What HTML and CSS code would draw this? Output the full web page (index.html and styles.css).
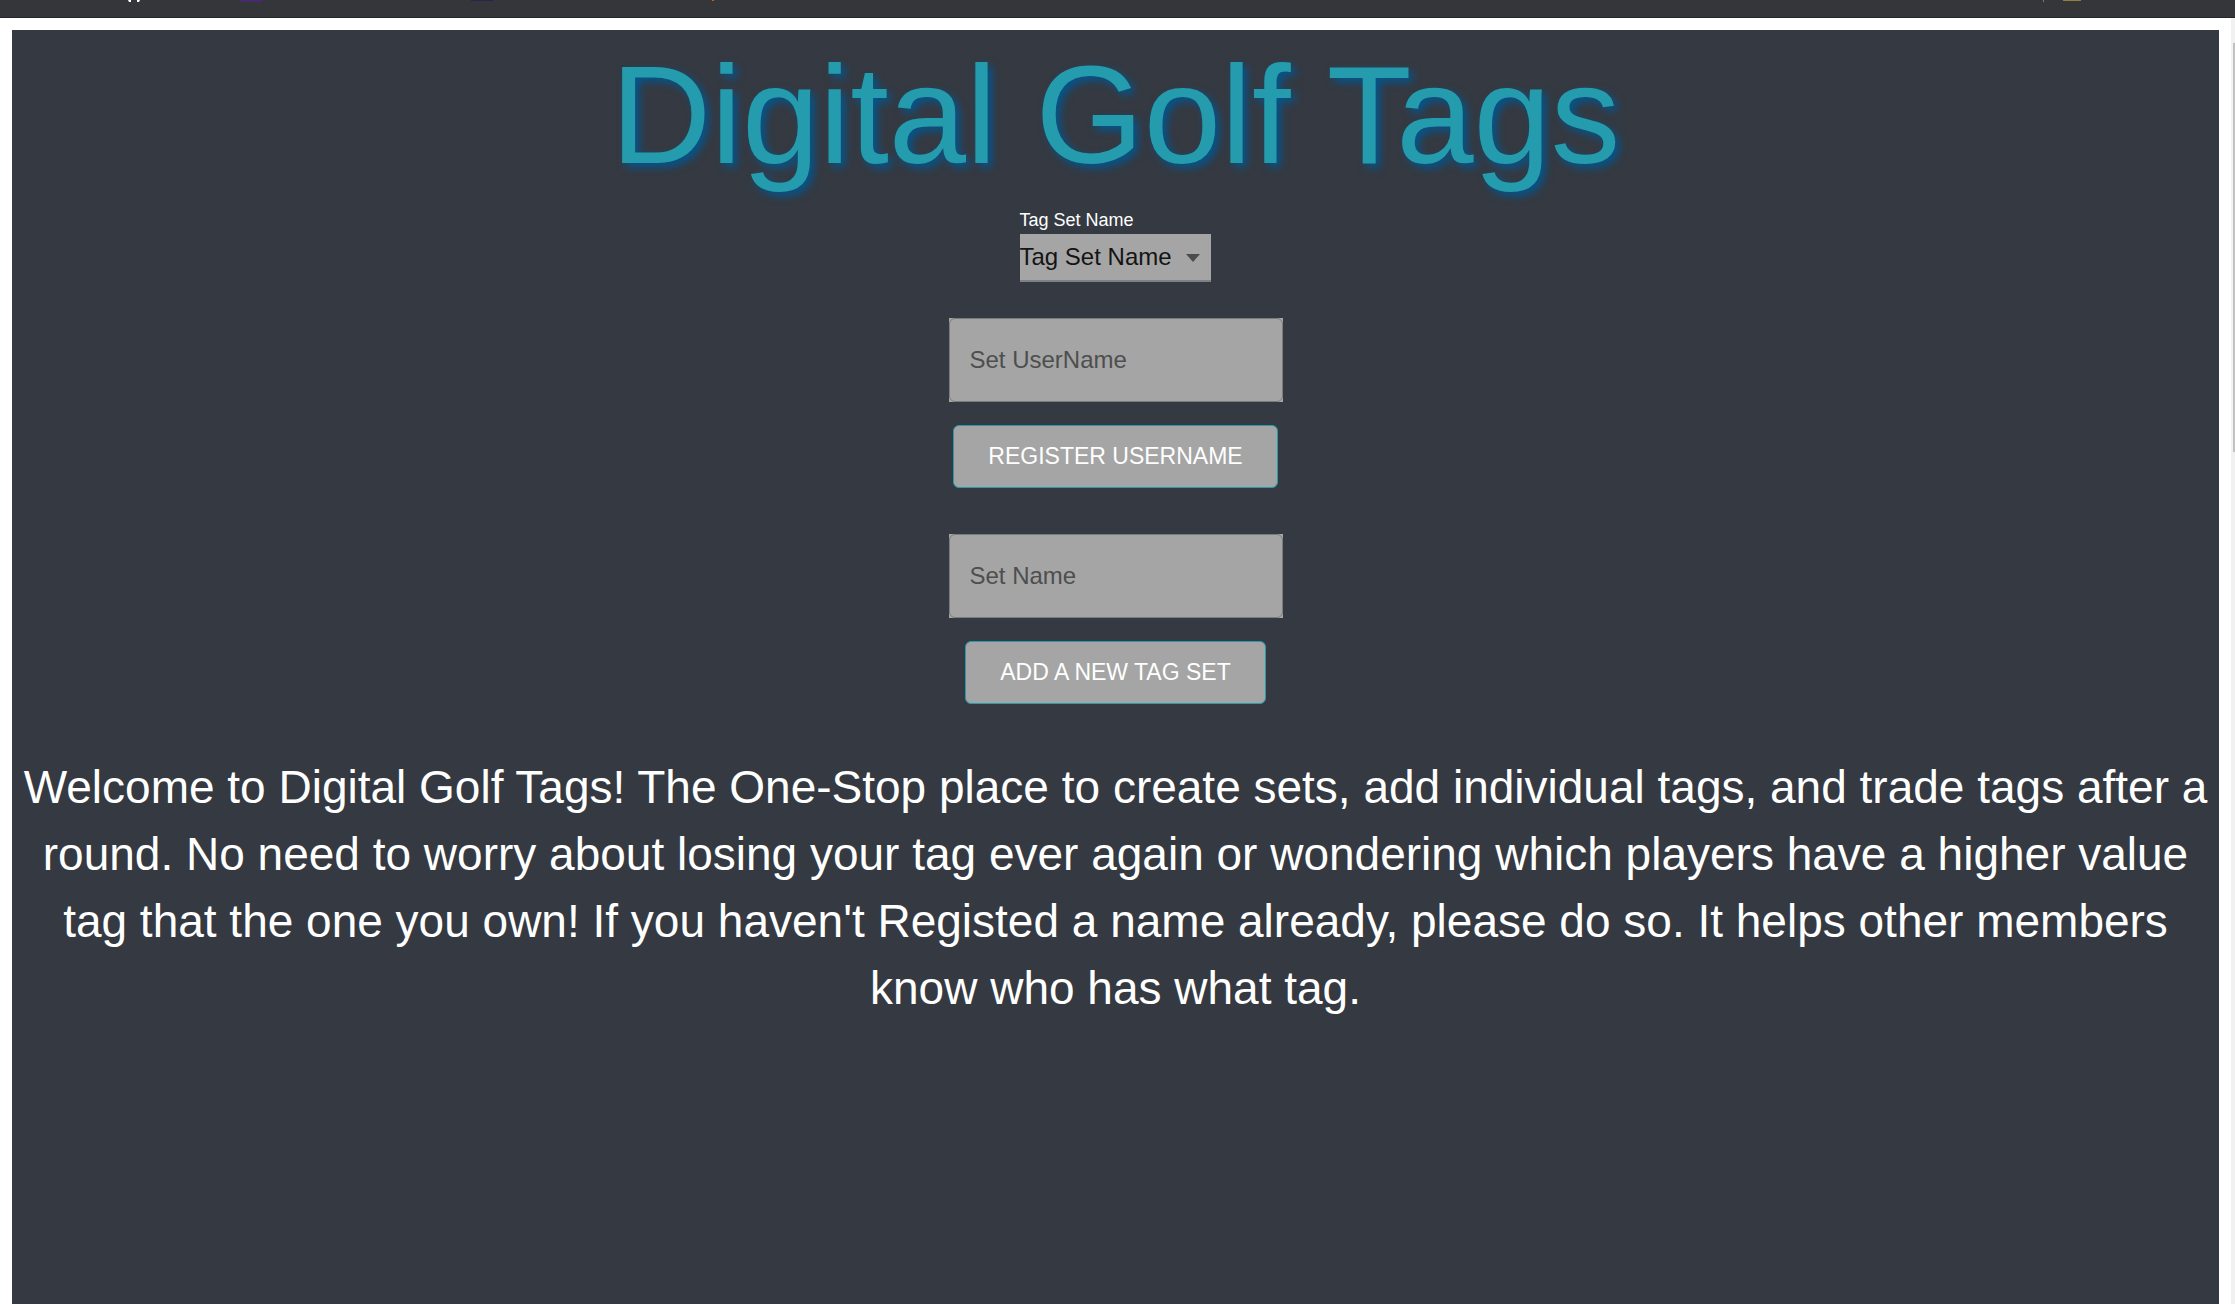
FILE: index.html
```html
<!DOCTYPE html>
<html lang="en">
<head>
<meta charset="utf-8">
<title>Digital Golf Tags</title>
<link rel="stylesheet" href="styles.css">
</head>
<body>
<div class="toolbar" aria-hidden="true">
  <svg class="toolbar-marks" width="2235" height="2" viewBox="0 0 2235 2">
    <path d="M128 0h3v2h-2zM137 0h3l-1 2h-2z" fill="#fff"/>
    <path d="M239 0h24l-1 2h-22z" fill="#472a6e"/>
    <path d="M470 0h24l-2 1h-20z" fill="#25264e"/>
    <path d="M712 0h2v1h-2z" fill="#c0621c"/>
    <path d="M2043 0h1v2h-1z" fill="#77787b"/>
    <path d="M2063 0h18v1h-18z" fill="#94803a"/>
  </svg>
</div>
<div class="viewport">
  <main class="panel">
    <h1 class="title">Digital Golf Tags</h1>
    <div class="tag-field">
      <label class="tag-label" for="tag-set">Tag Set Name</label>
      <div class="select-wrap">
        <select class="tag-select" id="tag-set"><option>Tag Set Name</option></select>
        <svg class="caret" width="14" height="8" viewBox="0 0 14 8"><path d="M0 0h14L7 8z" fill="#4c4c4c"/></svg>
      </div>
    </div>
    <form class="entry">
      <div class="entry-field"><input class="entry-input" type="text" placeholder="Set UserName" aria-label="Set UserName"></div>
      <button class="entry-button" type="button">REGISTER USERNAME</button>
    </form>
    <form class="entry">
      <div class="entry-field"><input class="entry-input" type="text" placeholder="Set Name" aria-label="Set Name"></div>
      <button class="entry-button" type="button">ADD A NEW TAG SET</button>
    </form>
    <p class="welcome">Welcome to Digital Golf Tags! The One-Stop place to create sets, add individual tags, and trade tags after a round. No need to worry about losing your tag ever again or wondering which players have a higher value tag that the one you own! If you haven't Registed a name already, please do so. It helps other members know who has what tag.</p>
  </main>
  <div class="scroll-track" aria-hidden="true"><div class="scroll-thumb"></div></div>
</div>
</body>
</html>
```
FILE: styles.css
```css
* { box-sizing: border-box; }

body {
  margin: 0;
  height: 100vh;
  display: flex;
  flex-direction: column;
  overflow: hidden;
  background: #fff;
  color: #fff;
  font-family: "Liberation Sans", Arial, sans-serif;
}

.toolbar {
  flex: none;
  height: 18px;
  overflow: hidden;
  background: #35363a;
  border-bottom: 1px solid #252629;
}

.toolbar-marks { display: block; }

.viewport {
  flex: 1;
  min-height: 0;
  display: flex;
}

.panel {
  flex: 1;
  margin: 12px 12px 0;
  padding: 0 4px;
  display: flex;
  flex-direction: column;
  align-items: center;
  background: #353941;
}

.title {
  margin: 0;
  font-size: 139px;
  line-height: 170px;
  font-weight: 400;
  color: #249cad;
  text-shadow: 4px 4px 8px #005792;
}

.tag-field {
  margin-right: 1px;
  display: flex;
  flex-direction: column;
}

.tag-label {
  margin-top: 8px;
  padding-bottom: 2px;
  font-size: 18px;
  line-height: 24px;
}

.select-wrap {
  display: grid;
  align-items: center;
  width: 191px;
}

.tag-select {
  grid-area: 1 / 1;
  appearance: none;
  height: 48px;
  padding: 0 0 2px;
  border: 0;
  border-bottom: 2px solid #808184;
  border-radius: 0;
  background: #a5a5a5;
  color: #141414;
  font: 24px "Liberation Sans", Arial, sans-serif;
}

.caret {
  grid-area: 1 / 1;
  justify-self: end;
  margin-right: 11px;
  pointer-events: none;
}

.entry {
  margin-top: 36px;
  padding-bottom: 10px;
  display: flex;
  flex-direction: column;
  align-items: center;
  gap: 23px;
}

.entry-field { background: #a5a5a5; }

.entry-input {
  display: block;
  width: 334px;
  height: 84px;
  padding: 0 20px;
  border: 1px solid #7b7c7e;
  border-radius: 6px;
  background: transparent;
  color: #141414;
  font: 24px "Liberation Sans", Arial, sans-serif;
}

.entry-input::placeholder { color: #4e4e4e; opacity: 1; }

.entry-button {
  height: 63px;
  padding: 0 34px;
  border: 1px solid #249cad;
  border-radius: 6px;
  background: #a5a5a5;
  color: #fff;
  font: 23px "Liberation Sans", Arial, sans-serif;
}

.welcome {
  margin: 40px 0 0;
  font-size: 46px;
  line-height: 67px;
  text-align: center;
}

.scroll-track {
  width: 4px;
  padding: 25px 0 0 2px;
  background: #f1f1f1;
}

.scroll-thumb {
  height: 409px;
  background: #c1c1c1;
}
```
